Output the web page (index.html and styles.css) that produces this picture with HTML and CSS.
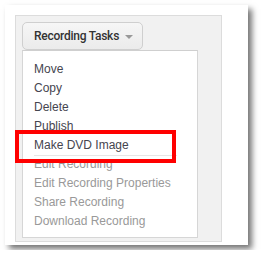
FILE: index.html
```html
<!DOCTYPE html>
<html lang="en">
<head>
    <meta charset="UTF-8">
    <meta name="viewport" content="width=device-width, initial-scale=1.0">
    <title>Recording Tasks</title>
    <link rel="stylesheet" href="styles.css">
</head>
<body>
    <div class="card">
        <div class="panel">
            <div class="tasks-button">
                <span class="label">Recording Tasks</span>
                <span class="caret"></span>
            </div>
            <ul class="menu">
                <li>Move</li>
                <li>Copy</li>
                <li>Delete</li>
                <li>Publish</li>
                <li class="hover">Make DVD Image</li>
                <li class="disabled">Edit Recording</li>
                <li class="disabled">Edit Recording Properties</li>
                <li class="disabled">Share Recording</li>
                <li class="disabled">Download Recording</li>
            </ul>
        </div>
        <div class="highlight"></div>
    </div>
</body>
</html>
```

FILE: styles.css
```css
body {
    margin: 0;
    padding: 0;
    background-color: #fff;
    font-family: 'Liberation Sans', Arial, sans-serif;
}
.card {
    position: relative;
    margin: 5px;
    width: 243px;
    height: 240px;
    box-sizing: border-box;
    padding: 10px 26px 3px 10px;
    background-color: #fff;
    box-shadow: 4px 4px 6px rgba(0,0,0,0.55);
}
.panel {
    height: 100%;
    box-sizing: border-box;
    padding: 6px 23px 3px 6px;
    background-color: #f1f1f1;
    border: 1px solid #dcdcdc;
}
.tasks-button {
    display: flex;
    align-items: center;
    width: 121px;
    height: 28px;
    box-sizing: border-box;
    padding: 0 0 0 11px;
    background: linear-gradient(#f6f6f6, #ebebeb);
    border: 1px solid #cfcfcf;
    border-radius: 5px;
    font-family: Roboto, 'Liberation Sans', sans-serif;
    font-size: 12px;
    font-weight: 500;
    color: #333;
    white-space: nowrap;
}
.label {
    letter-spacing: -0.25px;
}
.caret {
    flex-shrink: 0;
    margin-left: 6px;
    margin-top: 1px;
    width: 0;
    height: 0;
    border-left: 4px solid transparent;
    border-right: 4px solid transparent;
    border-top: 4px solid #999;
}
.menu {
    list-style: none;
    margin: 0;
    padding: 9px 0 6px 11px;
    background-color: #fff;
    border: 1px solid #d6d6d6;
    border-top-color: #cfcfcf;
    font-size: 12px;
    line-height: 19px;
    color: #45454f;
}
.menu li.hover {
    border-bottom: 1px solid #e6e6e6;
    margin-bottom: -1px;
    margin-right: 20px;
}
.menu li.disabled {
    color: #999;
}
.highlight {
    position: absolute;
    left: 10px;
    top: 125px;
    width: 161px;
    height: 33px;
    box-sizing: border-box;
    border: 4px solid #ff0000;
}
```
